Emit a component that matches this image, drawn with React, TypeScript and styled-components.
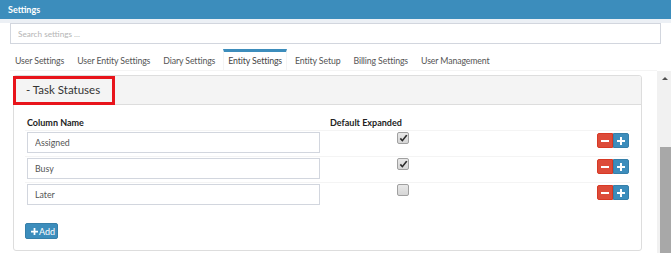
import React from "react";
import styled, { createGlobalStyle } from "styled-components";

const Global = createGlobalStyle`
  html, body { margin: 0; padding: 0; background: #fff; }
  body { font-family: Lato, "Open Sans", sans-serif; color: #333; }
  * { box-sizing: border-box; }
`;

const Page = styled.div`
  width: 671px;
  height: 253px;
  display: flex;
  flex-direction: column;
  overflow: hidden;
`;

const Header = styled.div`
  height: 23px;
  flex: none;
  background: #3c8dbc;
  border-bottom: 4px solid #ecf0f5;
  color: #fff;
  font-weight: 700;
  font-size: 9px;
  line-height: 19px;
  padding-left: 8px;
`;

const SearchRow = styled.div`
  padding: 0 10px;
  flex: none;
`;

const SearchInput = styled.input`
  display: block;
  width: 651px;
  height: 21px;
  border: 1px solid #d2d6de;
  padding: 0 7px;
  font-family: Lato, sans-serif;
  font-size: 8.2px;
  color: #555;
  outline: none;
  &::placeholder { color: #b5b5b5; }
`;

const Tabs = styled.div`
  display: flex;
  flex: none;
  margin: 5px 14px 0 10px;
  border-bottom: 1px solid #f4f4f4;
`;

const Tab = styled.div<{ $active?: boolean }>`
  height: 21px;
  padding: 0 4px;
  margin-right: 3px;
  border-top: 3px solid ${(p) => (p.$active ? "#3c8dbc" : "transparent")};
  border-left: 1px solid ${(p) => (p.$active ? "#f4f4f4" : "transparent")};
  border-right: 1px solid ${(p) => (p.$active ? "#f4f4f4" : "transparent")};
  background: ${(p) => (p.$active ? "#fff" : "transparent")};
  color: ${(p) => (p.$active ? "#444" : "#555")};
  font-size: 8.75px;
  letter-spacing: -0.12px;
  line-height: 17px;
  white-space: nowrap;
`;

const Body = styled.div`
  flex: 1;
  display: flex;
  min-height: 0;
`;

const Content = styled.div`
  flex: 1;
  padding: 4px 15px 0 13px;
  overflow: hidden;
`;

const Scrollbar = styled.div`
  width: 14px;
  background: #f1f1f1;
  display: flex;
  flex-direction: column;
  align-items: center;
`;

const ArrowUp = styled.div`
  margin-top: 6px;
  margin-left: 2px;
  width: 0;
  height: 0;
  border-left: 3px solid transparent;
  border-right: 3px solid transparent;
  border-bottom: 3px solid #505050;
`;

const Thumb = styled.div`
  margin-top: 67px;
  margin-left: 3px;
  width: 11px;
  flex: 1;
  background: #a8a8a8;
`;

const Panel = styled.div`
  width: 629px;
  height: 176px;
  border: 1px solid #ddd;
  border-radius: 3px;
`;

const PanelHeader = styled.div`
  position: relative;
  height: 29px;
  background: #f4f4f4;
  border-bottom: 1px solid #ddd;
  border-radius: 3px 3px 0 0;
  padding-left: 12px;
  font-size: 11.5px;
  line-height: 28px;
  color: #333;
`;

const Highlight = styled.div`
  position: absolute;
  left: -1px;
  top: 0;
  width: 102px;
  height: 29px;
  border: 3px solid #e8141b;
  pointer-events: none;
`;

const PanelBody = styled.div`
  padding: 0 11px 10px 11px;
`;

const Grid = styled.div`
  display: grid;
  grid-template-columns: 303px 149px 1fr;
`;

const HeadCell = styled.div`
  padding: 10px 2px 0 2px;
  height: 25px;
  font-weight: 700;
  font-size: 9px;
  line-height: 15px;
  color: #222;
  white-space: nowrap;
`;

const Cell = styled.div<{ $align?: string }>`
  border-top: 1px solid #f4f4f4;
  height: 26px;
  padding: 1px 2px 0 2px;
  display: flex;
  justify-content: ${(p) => p.$align || "flex-start"};
  align-items: flex-start;
`;

const NameInput = styled.input`
  display: block;
  width: 293px;
  height: 21px;
  border: 1px solid #d2d6de;
  padding: 0 7px;
  font-family: Lato, sans-serif;
  font-size: 8.8px;
  color: #555;
  outline: none;
`;

const Check = styled.span`
  width: 12px;
  height: 12px;
  margin-left: 1px;
  border: 1px solid #a0a0a0;
  border-radius: 2px;
  background: linear-gradient(#e8e8e8, #d6d6d6);
  display: flex;
  align-items: center;
  justify-content: center;
`;

const BtnGroup = styled.div`
  display: flex;
  margin-top: 1px;
  margin-right: -1px;
`;

const IconBtn = styled.button<{ $kind: "danger" | "primary" }>`
  width: 16px;
  height: 15px;
  padding: 0;
  border: 1px solid ${(p) => (p.$kind === "danger" ? "#d73925" : "#367fa9")};
  background: ${(p) => (p.$kind === "danger" ? "#dd4b39" : "#3c8dbc")};
  border-radius: ${(p) => (p.$kind === "danger" ? "2px 0 0 2px" : "0 2px 2px 0")};
  display: flex;
  align-items: center;
  justify-content: center;
`;

const AddBtn = styled.button`
  margin-top: 15px;
  height: 16px;
  width: 33px;
  padding: 0 0 0 5px;
  border: 1px solid #367fa9;
  border-radius: 2px;
  background: #3c8dbc;
  color: #fff;
  font-family: Lato, sans-serif;
  font-size: 9px;
  display: flex;
  align-items: center;
  gap: 1px;
`;

const PlusIcon = ({ size = 7 }: { size?: number }) => (
  <svg width={size} height={size} viewBox="0 0 8 8">
    <path d="M3 0h2v3h3v2H5v3H3V5H0V3h3z" fill="#fff" />
  </svg>
);

const MinusIcon = () => (
  <svg width={8} height={8} viewBox="0 0 8 8">
    <rect x="0" y="3" width="8" height="2" fill="#fff" />
  </svg>
);

const CheckMark = () => (
  <svg width={9} height={9} viewBox="0 0 10 10">
    <path d="M0.8 5.6 L3.8 8.6 L9.4 1.8 L7.8 0.8 L3.7 6 L2.2 4.2 Z" fill="#2a2a2a" />
  </svg>
);

const tabs = [
  "User Settings",
  "User Entity Settings",
  "Diary Settings",
  "Entity Settings",
  "Entity Setup",
  "Billing Settings",
  "User Management",
];

const rows = [
  { name: "Assigned", expanded: true },
  { name: "Busy", expanded: true },
  { name: "Later", expanded: false },
];

export default function App() {
  return (
    <Page>
      <Global />
      <Header>Settings</Header>
      <SearchRow>
        <SearchInput placeholder="Search settings ..." />
      </SearchRow>
      <Tabs>
        {tabs.map((t) => (
          <Tab key={t} $active={t === "Entity Settings"}>
            {t}
          </Tab>
        ))}
      </Tabs>
      <Body>
        <Content>
          <Panel>
            <PanelHeader>
              - Task Statuses
              <Highlight />
            </PanelHeader>
            <PanelBody>
              <Grid>
                <HeadCell>Column Name</HeadCell>
                <HeadCell>Default Expanded</HeadCell>
                <HeadCell />
                {rows.map((r) => (
                  <React.Fragment key={r.name}>
                    <Cell>
                      <NameInput defaultValue={r.name} />
                    </Cell>
                    <Cell $align="center">
                      <Check>{r.expanded && <CheckMark />}</Check>
                    </Cell>
                    <Cell $align="flex-end">
                      <BtnGroup>
                        <IconBtn $kind="danger">
                          <MinusIcon />
                        </IconBtn>
                        <IconBtn $kind="primary">
                          <PlusIcon size={8} />
                        </IconBtn>
                      </BtnGroup>
                    </Cell>
                  </React.Fragment>
                ))}
              </Grid>
              <AddBtn>
                <PlusIcon />
                Add
              </AddBtn>
            </PanelBody>
          </Panel>
        </Content>
        <Scrollbar>
          <ArrowUp />
          <Thumb />
        </Scrollbar>
      </Body>
    </Page>
  );
}
